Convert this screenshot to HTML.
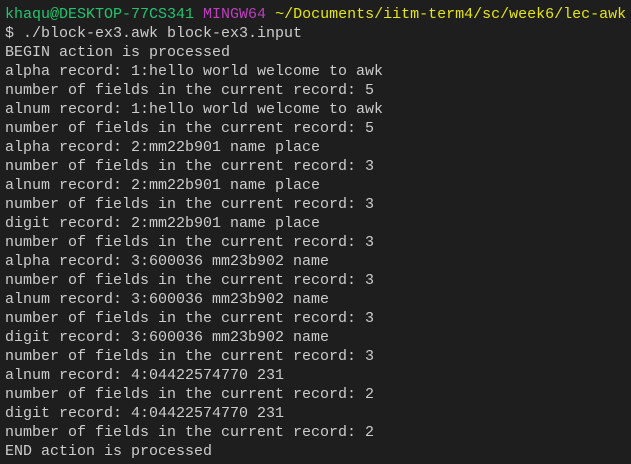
<!DOCTYPE html><html><head><style>
html,body{margin:0;background:#1e1e1e;width:631px;height:464px;overflow:hidden}
pre{margin:0;padding:5px 0 0 5px;font-family:"Liberation Mono",monospace;font-size:15px;line-height:19px;color:#cccccc;white-space:pre}
.g{color:#23c46e}.p{color:#bc3fbc}.y{color:#e5e510}
</style></head><body><pre><span class="g">khaqu@DESKTOP-77CS341</span> <span class="p">MINGW64</span> <span class="y">~/Documents/iitm-term4/sc/week6/lec-awk</span>
$ ./block-ex3.awk block-ex3.input
BEGIN action is processed
alpha record: 1:hello world welcome to awk
number of fields in the current record: 5
alnum record: 1:hello world welcome to awk
number of fields in the current record: 5
alpha record: 2:mm22b901 name place
number of fields in the current record: 3
alnum record: 2:mm22b901 name place
number of fields in the current record: 3
digit record: 2:mm22b901 name place
number of fields in the current record: 3
alpha record: 3:600036 mm23b902 name
number of fields in the current record: 3
alnum record: 3:600036 mm23b902 name
number of fields in the current record: 3
digit record: 3:600036 mm23b902 name
number of fields in the current record: 3
alnum record: 4:04422574770 231
number of fields in the current record: 2
digit record: 4:04422574770 231
number of fields in the current record: 2
END action is processed</pre></body></html>
